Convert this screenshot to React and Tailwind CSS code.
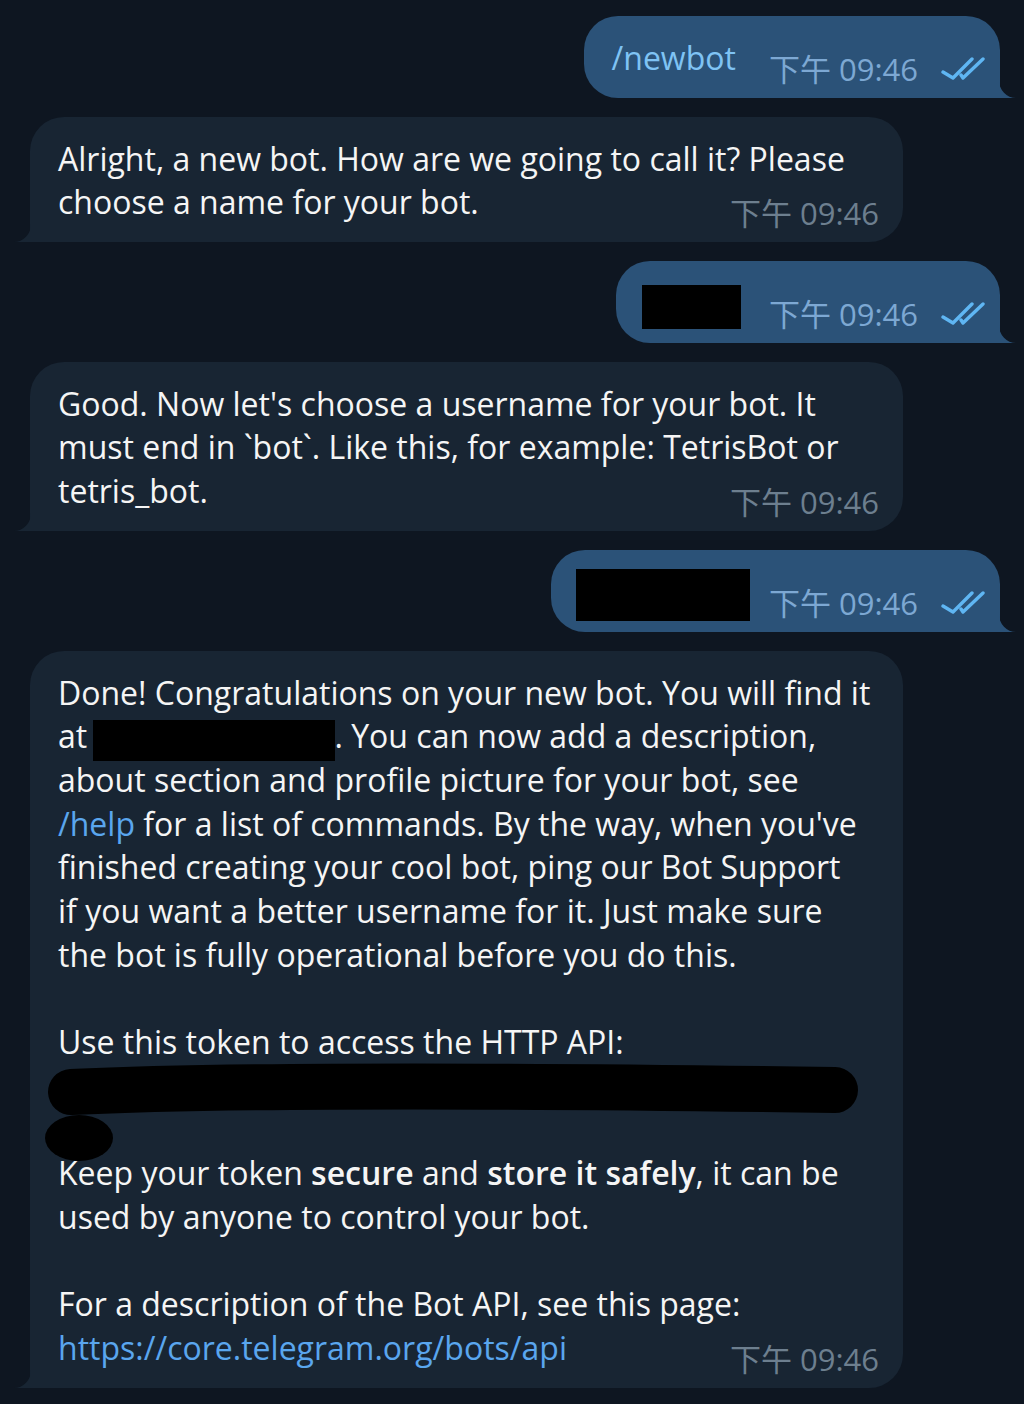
import React from "react";

const TIME = "下午 09:46";

function Checks() {
  return (
    <svg width="46" height="24" viewBox="0 0 46 24" fill="none" stroke="#5fb6f3" strokeWidth="3.4" strokeLinecap="round" strokeLinejoin="round" className="ml-[22px] shrink-0">
      <path d="M3 15 L13 21 L32 2" />
      <path d="M21 18 L23 21 L43 2" />
    </svg>
  );
}

function OutTail() {
  return (
    <svg width="17" height="18" viewBox="0 0 17 18" className="absolute right-[-16px] bottom-0">
      <path d="M0 0 A17 18 0 0 0 17 18 L0 18 Z" fill="#2b5278" />
    </svg>
  );
}

function InTail() {
  return (
    <svg width="17" height="18" viewBox="0 0 17 18" className="absolute left-[-16px] bottom-0">
      <path d="M17 0 A17 18 0 0 1 0 18 L17 18 Z" fill="#182533" />
    </svg>
  );
}

function Outgoing({ children, pl, gap }) {
  return (
    <div className={`relative self-end mr-[24px] flex items-end bg-[#2b5278] rounded-[34px] rounded-br-none pr-[14px] pt-[20px] pb-[18px] ${pl}`}>
      <div className="h-[43.7px] leading-[43.7px] whitespace-nowrap">{children}</div>
      <div className={`flex items-center mb-[-4px] ${gap}`}>
        <span className="text-[31px] leading-[30px] text-[#7da8d3] whitespace-nowrap">{TIME}</span>
        <Checks />
      </div>
      <OutTail />
    </div>
  );
}

function Incoming({ lines, last }) {
  return (
    <div className="relative self-start ml-[30px] w-[873px] bg-[#182533] rounded-[34px] rounded-bl-none pl-[28px] pr-[24px] pt-[20px] pb-[18px] text-[#f5f5f5] text-[32px] leading-[43.7px]">
      {lines}
      <div className="flex justify-between items-end">
        <div className="whitespace-nowrap">{last}</div>
        <span className="text-[31px] leading-[30px] text-[#6d7f8f] whitespace-nowrap mb-[-4px]">{TIME}</span>
      </div>
      <InTail />
    </div>
  );
}

const L = ({ children }) => <div className="whitespace-nowrap h-[43.7px]">{children}</div>;

export default function App() {
  return (
    <div className="w-[1024px] min-h-[1404px] bg-[#0e1621] flex flex-col gap-[19px] pt-[16px] font-['Open_Sans','Noto_Sans_CJK_TC',sans-serif] text-[32px]">
      <Outgoing pl="pl-[28px]" gap="ml-[33px]">
        <span className="text-[#7fc3f4]">/newbot</span>
      </Outgoing>

      <Incoming
        lines={<L>Alright, a new bot. How are we going to call it? Please</L>}
        last="choose a name for your bot."
      />

      <Outgoing pl="pl-[26px]" gap="ml-[28px]">
        <div className="mt-[4px] w-[99px] h-[44px] bg-black" />
      </Outgoing>

      <Incoming
        lines={
          <>
            <L>Good. Now let's choose a username for your bot. It</L>
            <L>must end in `bot`. Like this, for example: TetrisBot or</L>
          </>
        }
        last="tetris_bot."
      />

      <Outgoing pl="pl-[25px]" gap="ml-[19px]">
        <div className="mt-[-1px] w-[174px] h-[52px] bg-black" />
      </Outgoing>

      <Incoming
        lines={
          <>
            <L>Done! Congratulations on your new bot. You will find it</L>
            <L>
              at <span className="relative top-[6px] ml-[-3px] inline-block align-top w-[242px] h-[41px] bg-black" />. You can now add a description,
            </L>
            <L>about section and profile picture for your bot, see</L>
            <L>
              <span className="text-[#5aa6ee]">/help</span> for a list of commands. By the way, when you've
            </L>
            <L>finished creating your cool bot, ping our Bot Support</L>
            <L>if you want a better username for it. Just make sure</L>
            <L>the bot is fully operational before you do this.</L>
            <L />
            <L>Use this token to access the HTTP API:</L>
            <div className="relative h-[87.4px]">
              <svg width="830" height="110" viewBox="0 0 830 110" className="absolute left-[-14px] top-[-3px] overflow-visible">
                <path d="M27 31 C200 23 520 25 791 29" stroke="#000" strokeWidth="46" strokeLinecap="round" fill="none" />
                <ellipse cx="35" cy="77" rx="34" ry="23" fill="#000" />
              </svg>
            </div>
            <L>
              Keep your token <span className="font-semibold">secure</span> and <span className="font-semibold">store it safely</span>, it can be
            </L>
            <L>used by anyone to control your bot.</L>
            <L />
            <L>For a description of the Bot API, see this page:</L>
          </>
        }
        last={<span className="text-[#5aa6ee]">https://core.telegram.org/bots/api</span>}
      />
    </div>
  );
}
